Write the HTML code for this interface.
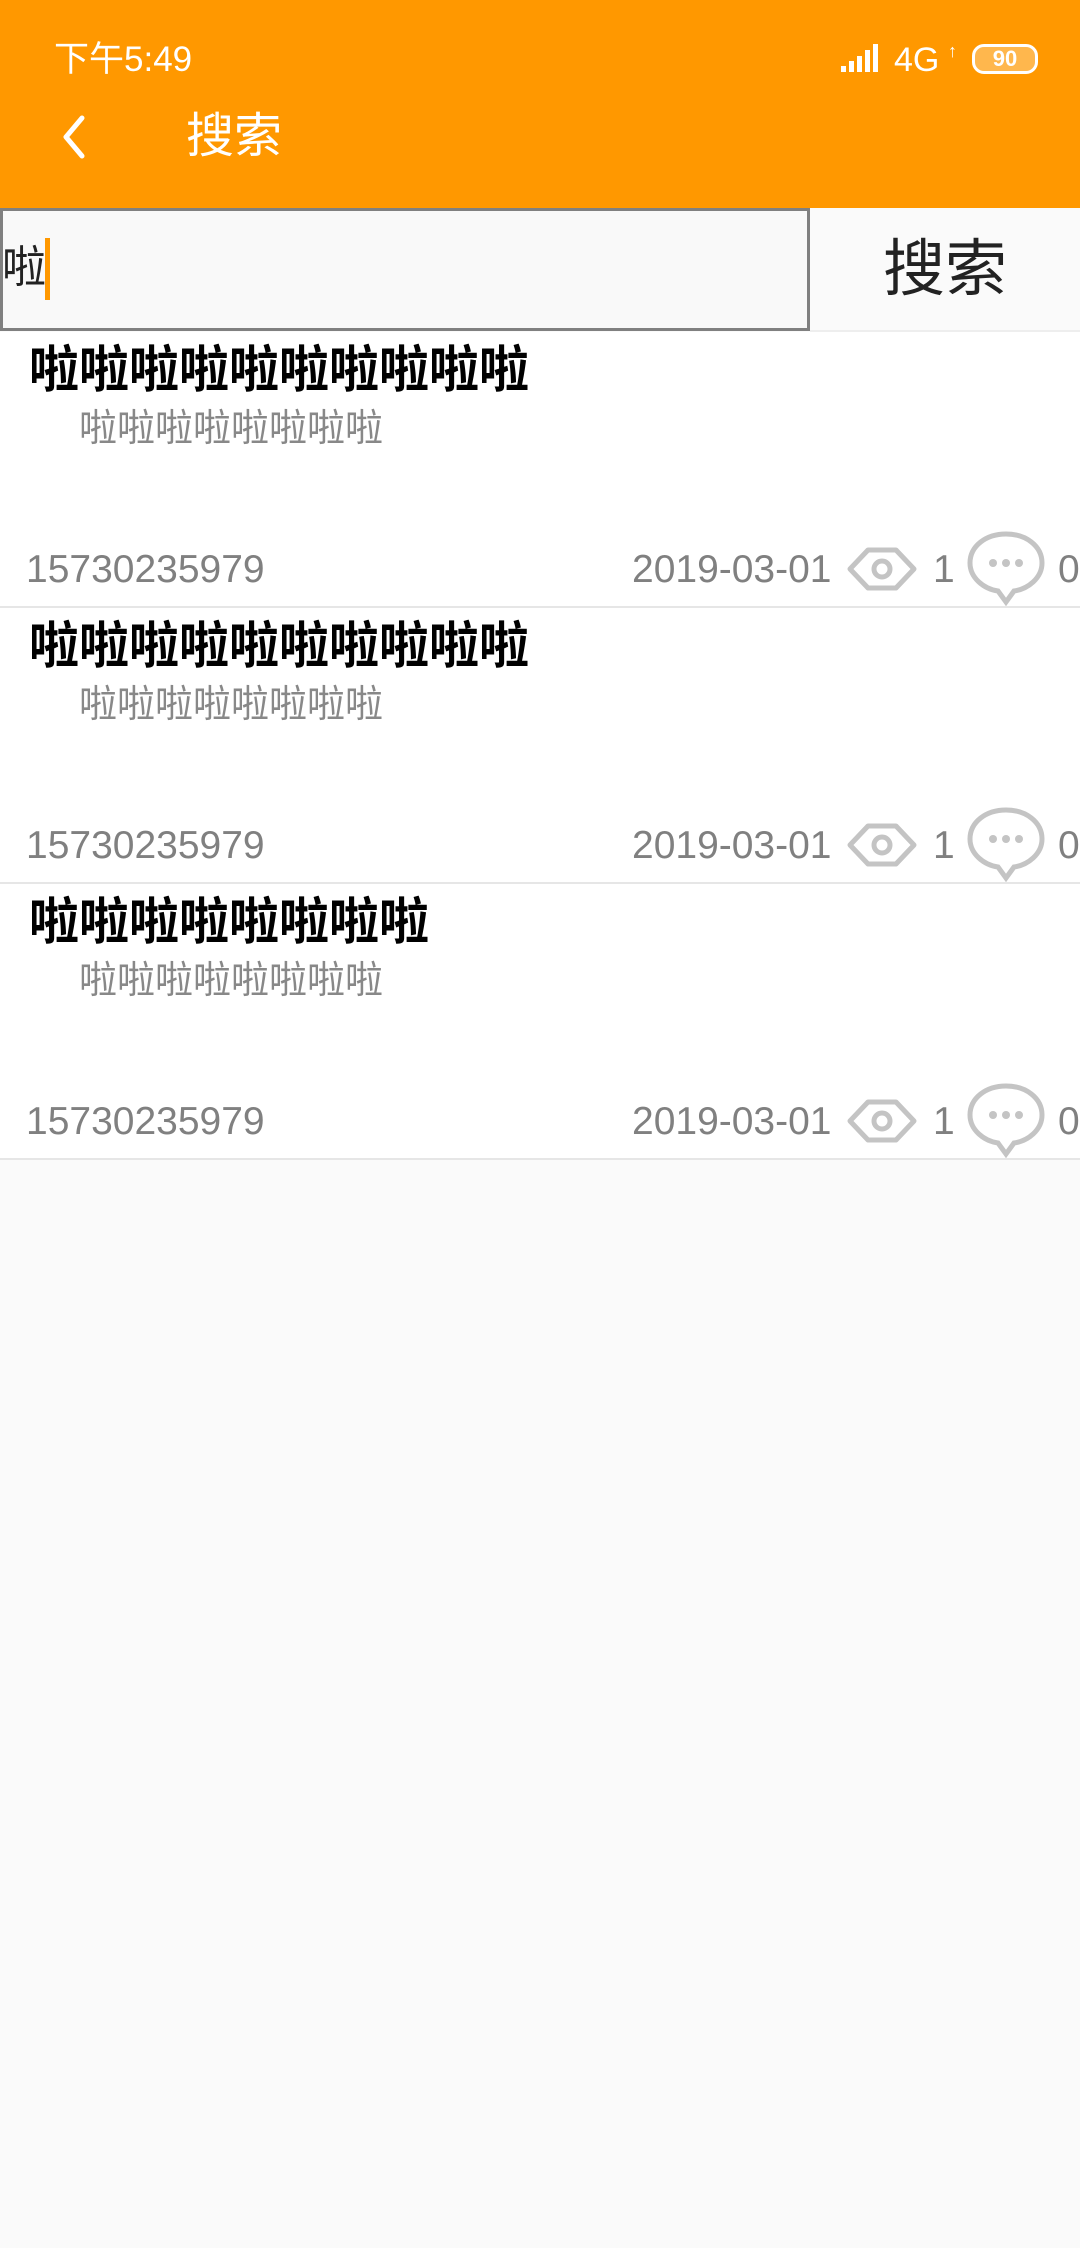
<!DOCTYPE html>
<html><head><meta charset="utf-8"><style>
*{margin:0;padding:0;box-sizing:border-box}
body{width:1080px;height:2248px;background:#fafafa;font-family:"Liberation Sans","Noto Sans CJK SC",sans-serif;position:relative;overflow:hidden}
.hdr{position:absolute;left:0;top:0;width:1080px;height:208px;background:#ff9800}
.abs{position:absolute;white-space:nowrap}
.item{position:absolute;left:0;width:1080px;height:276px;background:#fff;border-bottom:2px solid #e6e6e6}
.t{position:absolute;left:29px;top:8px;font-size:50px;font-weight:bold;color:#000;line-height:60px}
.s{position:absolute;left:79px;top:74px;font-size:38px;color:#888;line-height:46px}
.ph{position:absolute;left:26px;top:214px;font-size:39px;color:#808080;line-height:48px}
.dt{position:absolute;left:632px;top:214px;font-size:39px;color:#808080;line-height:48px}
.n1{position:absolute;left:933px;top:214px;font-size:39px;color:#808080;line-height:48px}
.n0{position:absolute;left:1058px;top:214px;font-size:39px;color:#808080;line-height:48px}
.eye{position:absolute;left:846px;top:212px}
.cm{position:absolute;left:966px;top:198px}
</style></head><body>
<div class="hdr"></div>
<div class="abs" style="left:54px;top:38px;font-size:35px;color:#fff;line-height:44px">下午5:49</div>
<svg class="abs" style="left:840px;top:42px" width="44" height="32"><g fill="#fff"><rect x="1" y="24" width="5" height="6"/><rect x="9" y="19" width="5" height="11"/><rect x="17" y="14" width="5" height="16"/><rect x="25" y="8" width="5" height="22"/><rect x="33" y="2" width="5" height="28"/></g></svg>
<div class="abs" style="left:894px;top:38px;font-size:34px;color:#fff;line-height:44px">4G</div>
<div class="abs" style="left:948px;top:42px;font-size:18px;color:#fff;line-height:18px">↑</div>
<div class="abs" style="left:972px;top:44px;width:66px;height:30px;border:3px solid #fff;border-radius:12px;background:rgba(255,255,255,.3);color:#fff;font-size:22px;font-weight:bold;text-align:center;line-height:24px">90</div>
<svg class="abs" style="left:56px;top:114px" width="34" height="46"><path d="M26 4 L10 23 L26 42" fill="none" stroke="#fff" stroke-width="5" stroke-linecap="round" stroke-linejoin="round"/></svg>
<div class="abs" style="left:186px;top:106px;font-size:48px;color:#fff;line-height:62px">搜索</div>
<div class="abs" style="left:0;top:208px;width:810px;height:123px;border:3px solid #808080;background:#f9f9f9"></div>
<div class="abs" style="left:2px;top:240px;font-size:44px;color:#222;line-height:56px">啦</div>
<div class="abs" style="left:45px;top:238px;width:5px;height:62px;background:#ff9800"></div>
<div class="abs" style="left:883px;top:232px;font-size:62px;color:#222;line-height:76px">搜索</div>
<div class="abs" style="left:810px;top:330px;width:270px;height:2px;background:#eee"></div>

<div class="item" style="top:332px">
<div class="t">啦啦啦啦啦啦啦啦啦啦</div><div class="s">啦啦啦啦啦啦啦啦</div>
<div class="ph">15730235979</div><div class="dt">2019-03-01</div>
<svg class="eye" width="72" height="50"><path d="M4 25 L22 6 L50 6 L68 25 L50 44 L22 44 Z" fill="none" stroke="#c4c4c4" stroke-width="5" stroke-linejoin="round"/><circle cx="36" cy="25" r="8" fill="none" stroke="#c4c4c4" stroke-width="5"/></svg>
<div class="n1">1</div>
<svg class="cm" width="80" height="76"><path d="M40 4 C20 4 4 16 4 33 C4 48 18 59 32 61 L40 72 L48 61 C62 59 76 48 76 33 C76 16 60 4 40 4 Z" fill="none" stroke="#c4c4c4" stroke-width="5"/><circle cx="27" cy="33" r="4" fill="#c4c4c4"/><circle cx="40" cy="33" r="4" fill="#c4c4c4"/><circle cx="53" cy="33" r="4" fill="#c4c4c4"/></svg>
<div class="n0">0</div>
</div>
<div class="item" style="top:608px">
<div class="t">啦啦啦啦啦啦啦啦啦啦</div><div class="s">啦啦啦啦啦啦啦啦</div>
<div class="ph">15730235979</div><div class="dt">2019-03-01</div>
<svg class="eye" width="72" height="50"><path d="M4 25 L22 6 L50 6 L68 25 L50 44 L22 44 Z" fill="none" stroke="#c4c4c4" stroke-width="5" stroke-linejoin="round"/><circle cx="36" cy="25" r="8" fill="none" stroke="#c4c4c4" stroke-width="5"/></svg>
<div class="n1">1</div>
<svg class="cm" width="80" height="76"><path d="M40 4 C20 4 4 16 4 33 C4 48 18 59 32 61 L40 72 L48 61 C62 59 76 48 76 33 C76 16 60 4 40 4 Z" fill="none" stroke="#c4c4c4" stroke-width="5"/><circle cx="27" cy="33" r="4" fill="#c4c4c4"/><circle cx="40" cy="33" r="4" fill="#c4c4c4"/><circle cx="53" cy="33" r="4" fill="#c4c4c4"/></svg>
<div class="n0">0</div>
</div>
<div class="item" style="top:884px">
<div class="t">啦啦啦啦啦啦啦啦</div><div class="s">啦啦啦啦啦啦啦啦</div>
<div class="ph">15730235979</div><div class="dt">2019-03-01</div>
<svg class="eye" width="72" height="50"><path d="M4 25 L22 6 L50 6 L68 25 L50 44 L22 44 Z" fill="none" stroke="#c4c4c4" stroke-width="5" stroke-linejoin="round"/><circle cx="36" cy="25" r="8" fill="none" stroke="#c4c4c4" stroke-width="5"/></svg>
<div class="n1">1</div>
<svg class="cm" width="80" height="76"><path d="M40 4 C20 4 4 16 4 33 C4 48 18 59 32 61 L40 72 L48 61 C62 59 76 48 76 33 C76 16 60 4 40 4 Z" fill="none" stroke="#c4c4c4" stroke-width="5"/><circle cx="27" cy="33" r="4" fill="#c4c4c4"/><circle cx="40" cy="33" r="4" fill="#c4c4c4"/><circle cx="53" cy="33" r="4" fill="#c4c4c4"/></svg>
<div class="n0">0</div>
</div>
</body></html>
